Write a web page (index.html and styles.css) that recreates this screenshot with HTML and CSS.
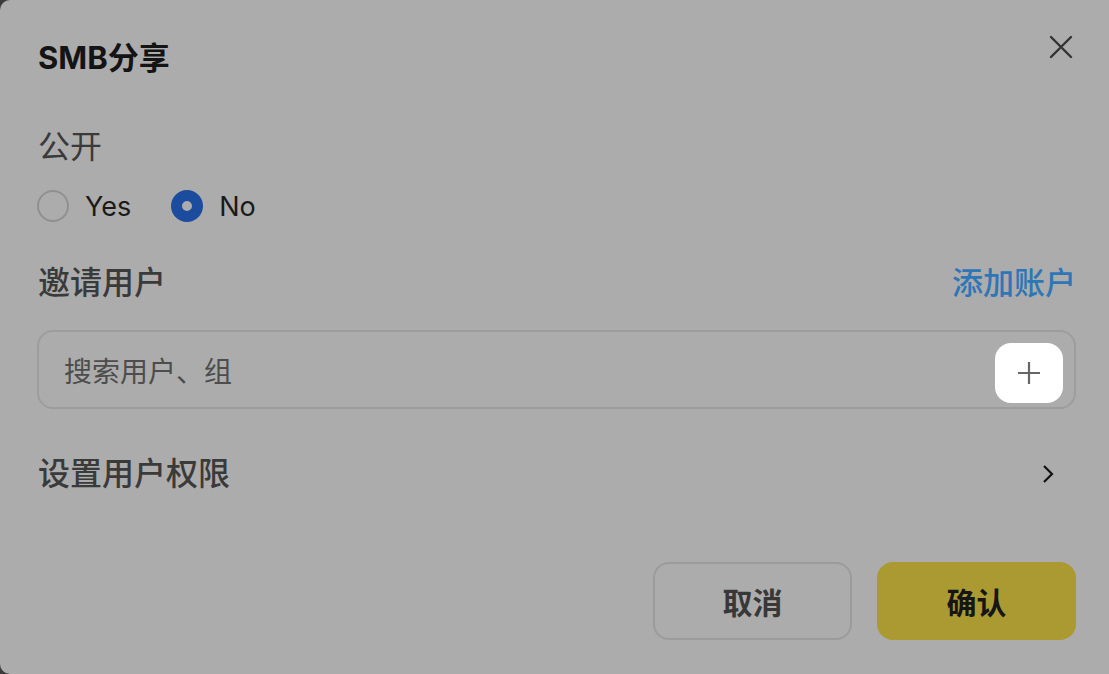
FILE: index.html
```html
<!DOCTYPE html>
<html>
    <head>
        <meta charset="utf-8">
        <link rel="stylesheet" href="styles.css">
    </head>
    <body>
        <div class="dialog">
            <div class="header">
                <div class="title">SMB分享</div>
                <svg class="close" width="24" height="24" viewBox="0 0 24 24">
                    <path d="M2 2 L22 22 M22 2 L2 22" stroke="#333" stroke-width="2.4" stroke-linecap="round" fill="none"/>
                </svg>
            </div>

            <div class="label public">公开</div>
            <div class="radios">
                <label class="radio"><span class="dot"></span>Yes</label>
                <label class="radio on"><span class="dot"></span>No</label>
            </div>

            <div class="row invite">
                <div class="label">邀请用户</div>
                <div class="link">添加账户</div>
            </div>

            <div class="search">
                <span class="placeholder">搜索用户、组</span>
                <div class="plus">
                    <svg width="24" height="24" viewBox="0 0 24 24">
                        <path d="M12 1 V23 M1 12 H23" stroke="#666" stroke-width="2.2" fill="none"/>
                    </svg>
                </div>
            </div>

            <div class="row perm">
                <div class="label">设置用户权限</div>
                <svg class="chev" width="12" height="20" viewBox="0 0 12 20">
                    <path d="M2 2 L10 10 L2 18" stroke="#111" stroke-width="2.2" fill="none"/>
                </svg>
            </div>

            <div class="actions">
                <div class="btn cancel">取消</div>
                <div class="btn ok">确认</div>
            </div>
        </div>
    </body>
</html>
```

FILE: styles.css
```css
html, body {
    margin: 0;
    height: 100%;
    background: #3c3c3c;
}
body {
    font-family: Inter, "Noto Sans CJK SC", sans-serif;
    color: #1a1a1a;
    overflow: hidden;
}
.dialog {
    box-sizing: border-box;
    height: 674px;
    background: #acacac;
    border-radius: 10px 0 0 10px;
    padding: 38px 33px 0 38px;
}
.header {
    display: flex;
    justify-content: space-between;
    align-items: flex-start;
}
.title {
    font-size: 31px;
    font-weight: 700;
    line-height: 40px;
    color: #141414;
}
.close {
    margin-top: -3px;
    margin-right: 3px;
}
.label {
    font-size: 32px;
    line-height: 40px;
    color: #3a3a3a;
}
.public {
    margin-top: 49px;
}
.radios {
    display: flex;
    gap: 41px;
    margin-top: 19px;
    height: 40px;
    align-items: center;
}
.radio {
    display: flex;
    align-items: center;
    gap: 16px;
    font-size: 27px;
    color: #1a1a1a;
}
.dot {
    box-sizing: border-box;
    width: 32px;
    height: 32px;
    margin-left: -1px;
    border-radius: 50%;
    border: 2px solid #909090;
}
.radio.on .dot {
    border: 11px solid #1c4c9e;
    background: #acacac;
}
.row {
    display: flex;
    justify-content: space-between;
    align-items: center;
}
.invite {
    margin-top: 37px;
}
.invite .label {
    font-weight: 500;
}
.link {
    font-size: 31px;
    line-height: 40px;
    color: #2e76b6;
    font-weight: 500;
}
.search {
    box-sizing: border-box;
    height: 79px;
    margin-top: 27px;
    margin-left: -1px;
    border: 2px solid #9d9d9d;
    border-radius: 16px;
    display: flex;
    align-items: center;
    justify-content: space-between;
    padding: 0 11px 0 25px;
}
.placeholder {
    font-size: 28px;
    color: #4d4d4d;
}
.plus {
    width: 68px;
    height: 60px;
    margin-top: 6px;
    background: #fff;
    border-radius: 16px;
    display: flex;
    align-items: center;
    justify-content: center;
}
.perm {
    margin-top: 45px;
}
.perm .label {
    font-weight: 500;
}
.chev {
    margin-right: 22px;
}
.actions {
    display: flex;
    justify-content: flex-end;
    gap: 25px;
    margin-top: 68px;
}
.btn {
    box-sizing: border-box;
    width: 199px;
    height: 78px;
    border-radius: 16px;
    display: flex;
    align-items: center;
    justify-content: center;
    font-size: 30px;
    font-weight: 700;
}
.cancel {
    border: 2px solid #9b9b9b;
    color: #383838;
}
.ok {
    background: #ab9a32;
    color: #161616;
}
```
